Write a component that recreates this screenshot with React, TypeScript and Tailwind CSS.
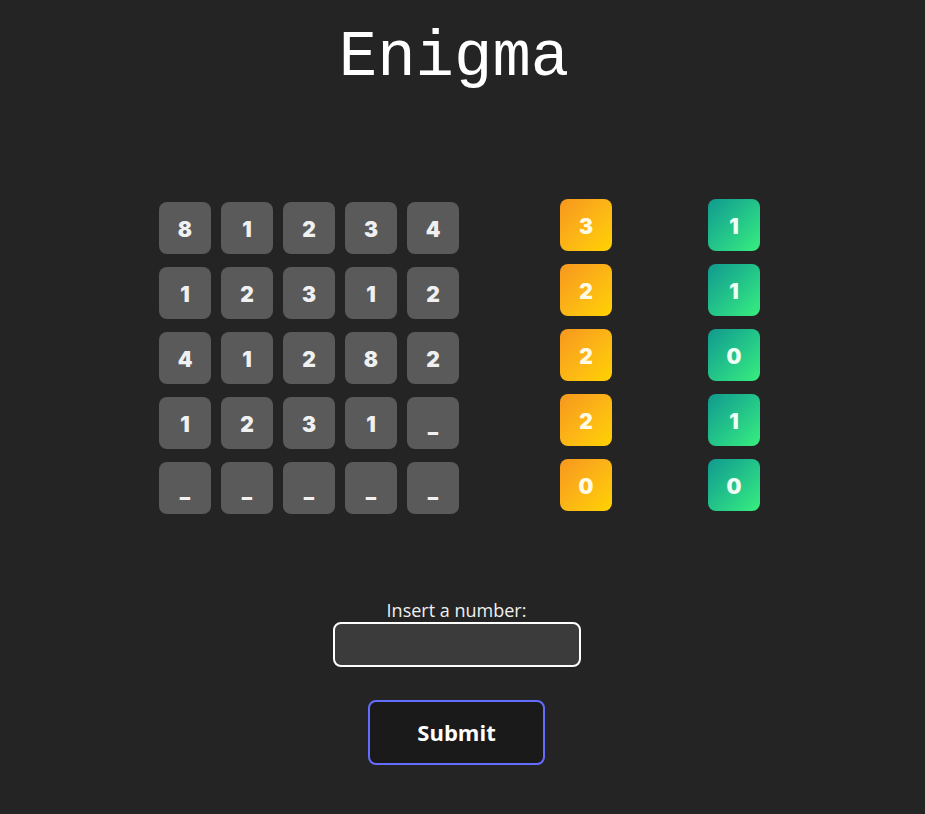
import React from "react";

const grid: string[][] = [
  ["8", "1", "2", "3", "4"],
  ["1", "2", "3", "1", "2"],
  ["4", "1", "2", "8", "2"],
  ["1", "2", "3", "1", "_"],
  ["_", "_", "_", "_", "_"],
];
const orange = ["3", "2", "2", "2", "0"];
const green = ["1", "1", "0", "1", "0"];

const digitFont = { fontFamily: "Inter, 'Open Sans', sans-serif" };

export default function App() {
  return (
    <div className="min-h-[814px] w-full bg-[#242424] text-white">
      <div className="w-[913px] flex flex-col items-center">
        <h1
          className="mt-[18px] mr-[5px] text-[64px] leading-[80px] font-normal text-white"
          style={{ fontFamily: "'Liberation Mono', 'DejaVu Sans Mono', monospace" }}
        >
          Enigma
        </h1>
        <div className="mt-[101px] ml-[6px] flex flex-row items-start">
          <div className="flex flex-col gap-[13px] mt-[3px]">
            {grid.map((row, r) => (
              <div key={r} className="flex flex-row gap-[10px]">
                {row.map((c, i) => (
                  <div
                    key={i}
                    className="w-[52px] h-[52px] pt-[3px] rounded-[8px] bg-[#5a5a5a] flex items-center justify-center text-[21px] font-black text-[#f0f0f0]"
                    style={digitFont}
                  >
                    {c}
                  </div>
                ))}
              </div>
            ))}
          </div>
          <div className="ml-[101px] flex flex-col gap-[13px]">
            {orange.map((c, i) => (
              <div
                key={i}
                className="w-[52px] h-[52px] pt-[3px] rounded-[8px] bg-gradient-to-br from-[#f7971e] to-[#ffd200] flex items-center justify-center text-[21px] font-black text-[#fffbe6]"
                style={digitFont}
              >
                {c}
              </div>
            ))}
          </div>
          <div className="ml-[96px] flex flex-col gap-[13px]">
            {green.map((c, i) => (
              <div
                key={i}
                className="w-[52px] h-[52px] pt-[3px] rounded-[8px] bg-gradient-to-br from-[#11998e] to-[#38ef7d] flex items-center justify-center text-[21px] font-black text-[#f0fff4]"
                style={digitFont}
              >
                {c}
              </div>
            ))}
          </div>
        </div>
        <div
          className="mt-[84px] flex flex-col items-center"
          style={{ fontFamily: "'Open Sans', 'Noto Sans', sans-serif" }}
        >
          <label className="text-[18px] leading-[24px] text-[#f0f0f0]">Insert a number:</label>
          <input
            className="w-[248px] h-[45px] rounded-[8px] border-2 border-white bg-[#3b3b3b] outline-none text-white px-2"
            type="text"
          />
          <button className="mt-[33px] w-[177px] h-[65px] rounded-[8px] border-2 border-[#646cff] bg-[#1a1a1a] text-[22px] font-bold text-white">
            Submit
          </button>
        </div>
      </div>
    </div>
  );
}
